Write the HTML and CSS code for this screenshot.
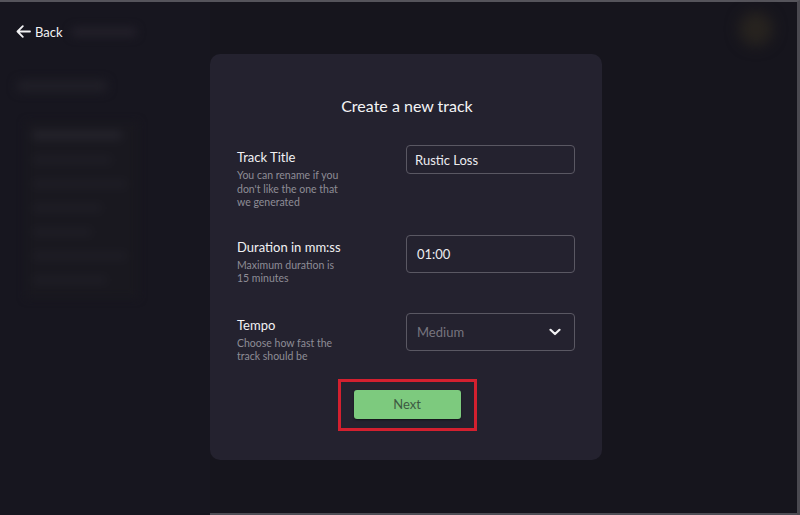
FILE: index.html
```html
<!DOCTYPE html>
<html lang="en">
<head>
<meta charset="utf-8">
<title>Create a new track</title>
<link rel="stylesheet" href="styles.css">
</head>
<body>
<div class="frame">
  <aside class="sidebar">
    <div class="header">
      <a class="back">
        <svg width="15" height="13" viewBox="0 0 15 13" fill="none" stroke="#f2f2f4" stroke-width="1.8" stroke-linecap="round" stroke-linejoin="round"><path d="M14 6.5H1.5M6.8 1.2L1.5 6.5l5.3 5.3"/></svg>
        <span>Back</span>
      </a>
      <div class="blur-title"></div>
    </div>
    <div class="blur-nav">
      <div class="blur-item"></div>
      <div class="blur-panel">
        <div class="bl bl-head"></div>
        <div class="bl w1"></div>
        <div class="bl w2"></div>
        <div class="bl w3"></div>
        <div class="bl w4"></div>
        <div class="bl w2"></div>
        <div class="bl w5"></div>
      </div>
    </div>
  </aside>
  <main class="main">
    <section class="card">
      <h1 class="title">Create a new track</h1>
      <div class="row">
        <div class="label">
          <div class="name">Track Title</div>
          <div class="hint">You can rename if you<br>don't like the one that<br>we generated</div>
        </div>
        <div class="field small">Rustic Loss</div>
      </div>
      <div class="row r2">
        <div class="label">
          <div class="name">Duration in mm:ss</div>
          <div class="hint">Maximum duration is<br>15 minutes</div>
        </div>
        <div class="field tall">01:00</div>
      </div>
      <div class="row r3">
        <div class="label">
          <div class="name">Tempo</div>
          <div class="hint">Choose how fast the<br>track should be</div>
        </div>
        <div class="field tall select">
          <span class="placeholder">Medium</span>
          <svg width="12" height="8" viewBox="0 0 12 8" fill="none" stroke="#f2f2f4" stroke-width="2.2" stroke-linecap="round" stroke-linejoin="round"><path d="M1.5 1.8L6 6l4.5-4.2"/></svg>
        </div>
      </div>
      <div class="actions">
        <div class="highlight">
          <button class="next">Next</button>
        </div>
      </div>
    </section>
    <div class="avatar"></div>
  </main>
</div>
</body>
</html>
```

FILE: styles.css
```css
* { box-sizing: border-box; }
html, body { margin: 0; padding: 0; }
body {
  width: 800px;
  height: 515px;
  background: #17161e;
  font-family: "Lato", "Noto Sans", sans-serif;
  color: #f2f2f4;
  overflow: hidden;
}
.frame {
  display: flex;
  width: 800px;
  height: 515px;
  border-top: 2px solid #55545b;
  border-right: 3px solid #4a4950;
}
.sidebar {
  width: 210px;
  flex: none;
  background: #17161f;
}
.header {
  display: flex;
  align-items: center;
  padding: 13px 0 0 16px;
  height: 46px;
}
.back {
  display: flex;
  align-items: center;
  gap: 4px;
  font-size: 13px;
  color: #f2f2f4;
}
.blur-title {
  width: 66px;
  height: 10px;
  margin-left: 8px;
  background: #221f29;
  border-radius: 5px;
  filter: blur(4px);
}
.blur-nav {
  padding: 32px 0 0 16px;
}
.blur-item {
  width: 92px;
  height: 12px;
  background: #201f27;
  border-radius: 6px;
  filter: blur(5px);
}
.blur-panel {
  margin: 30px 0 0 10px;
  width: 112px;
  padding: 8px 6px 14px;
  background: #19181f;
  filter: blur(4px);
  display: flex;
  flex-direction: column;
  gap: 16px;
}
.bl {
  height: 8px;
  background: #1e1d25;
  border-radius: 4px;
}
.bl-head { width: 90px; background: #23222a; height: 10px; }
.w1 { width: 80px; }
.w2 { width: 95px; }
.w3 { width: 70px; }
.w4 { width: 60px; }
.w5 { width: 75px; }
.main {
  flex: 1;
  display: flex;
  justify-content: space-between;
  align-items: flex-start;
  background: #16151d;
  border-bottom: 2px solid #4e4d55;
  height: 513px;
}
.card {
  margin-top: 52px;
  width: 392px;
  background: #24222f;
  border-radius: 10px;
  padding: 42px 27px 29px 27px;
}
.title {
  margin: 0;
  text-align: center;
  font-size: 16px;
  line-height: 20px;
  font-weight: 400;
  color: #f4f4f6;
  padding-left: 2px;
}
.row {
  display: flex;
  justify-content: space-between;
  align-items: flex-start;
  margin-top: 29px;
}
.r2 { margin-top: 25px; }
.r3 { margin-top: 27px; }
.label { padding-top: 4px; }
.name {
  font-size: 13px;
  line-height: 16px;
  color: #f2f2f4;
}
.hint {
  margin-top: 4px;
  font-size: 10.5px;
  line-height: 13.5px;
  color: #8e8d96;
}
.field {
  width: 169px;
  border: 1px solid #5a5863;
  border-radius: 4px;
  display: flex;
  align-items: center;
  padding: 0 8px;
  font-size: 13px;
  color: #ececef;
}
.small { height: 29px; }
.tall { height: 38px; padding-left: 10px; }
.select { justify-content: space-between; padding-right: 13px; }
.placeholder { color: #77757f; }
.actions {
  display: flex;
  justify-content: center;
  margin-top: 15px;
  padding-left: 2px;
}
.highlight {
  border: 3px solid #d3202f;
  padding: 8px 13px 9px 13px;
}
.next {
  display: block;
  width: 107px;
  height: 29px;
  border: none;
  border-radius: 3px;
  background: #7dca7e;
  color: #3d5a42;
  font-family: "Lato", "Noto Sans", sans-serif;
  font-size: 13px;
  box-shadow: 0 1px 2px rgba(0,0,0,0.5);
}
.avatar {
  margin: 10px 24px 0 0;
  width: 34px;
  height: 34px;
  border-radius: 50%;
  background: #27231f;
  filter: blur(7px);
}
```
